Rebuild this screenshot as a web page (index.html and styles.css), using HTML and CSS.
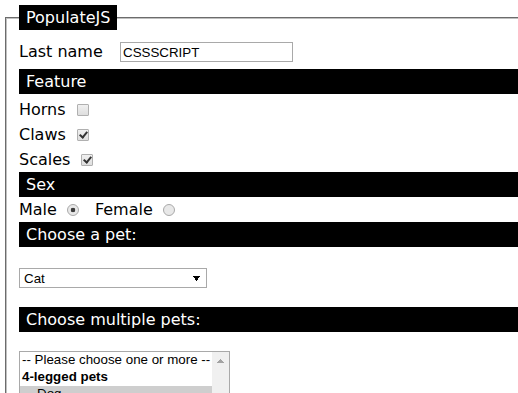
FILE: index.html
```html
<!DOCTYPE html>
<html lang="en">
<head>
<meta charset="utf-8">
<title>PopulateJS</title>
<link rel="stylesheet" href="styles.css">
</head>
<body>
<form class="form">
  <fieldset class="panel">
    <legend class="panel-title">PopulateJS</legend>
    <div class="name-row">
      <label for="lastname" class="name-label">Last name</label>
      <input id="lastname" class="text-input" type="text" value="CSSSCRIPT">
    </div>
    <h2 class="bar">Feature</h2>
    <div class="checks">
      <label class="check-row">Horns<input type="checkbox" class="check" name="horns"></label>
      <label class="check-row">Claws<input type="checkbox" class="check" name="claws" checked></label>
      <label class="check-row">Scales<input type="checkbox" class="check" name="scales" checked></label>
    </div>
    <h2 class="bar">Sex</h2>
    <div class="radio-row">
      <label class="radio-label">Male<input type="radio" class="radio" name="sex" value="male" checked></label>
      <label class="radio-label">Female<input type="radio" class="radio" name="sex" value="female"></label>
    </div>
    <h2 class="bar">Choose a pet:</h2>
    <select class="single" name="pet">
      <option>Dog</option>
      <option selected>Cat</option>
      <option>Hamster</option>
    </select>
    <h2 class="bar">Choose multiple pets:</h2>
    <div class="listbox">
      <select class="multi" name="pets" multiple size="6">
        <option>-- Please choose one or more --</option>
        <optgroup label="4-legged pets">
          <option selected>Dog</option>
          <option>Cat</option>
          <option>Hamster</option>
        </optgroup>
        <optgroup label="Flying pets">
          <option>Parrot</option>
          <option>Macaw</option>
          <option>Albatross</option>
        </optgroup>
      </select>
      <div class="scrollbar" aria-hidden="true">
        <div class="scroll-up"></div>
      </div>
    </div>
  </fieldset>
</form>
</body>
</html>
```
FILE: styles.css
```css
html {
  overflow: hidden;
}
body {
  margin: 0;
  background: #fff;
  color: #000;
  font-family: "DejaVu Sans", Verdana, sans-serif;
  font-size: 16px;
}
.form {
  margin: 0;
}
.panel {
  box-sizing: border-box;
  width: 640px;
  margin: 5px 0 0 5px;
  padding: 0 12px 20px 12px;
  border: 2px groove #c0c0c0;
  min-width: 0;
}
.panel-title {
  background: #000;
  color: #fff;
  padding: 0 7px;
  line-height: 25px;
  height: 25px;
}
.name-row {
  display: flex;
  align-items: center;
  padding: 12px 0 7px 0;
}
.name-label {
  flex: none;
  width: 101px;
  line-height: 20px;
}
.text-input {
  box-sizing: border-box;
  width: 173px;
  height: 20px;
  margin: 0;
  padding: 0 2px;
  border: 1px solid #a9a9a9;
  font-family: "Liberation Sans", Arial, sans-serif;
  font-size: 13.33px;
  color: #000;
}
.bar {
  margin: 0;
  height: 25px;
  line-height: 25px;
  padding-left: 7px;
  background: #000;
  color: #fff;
  font-size: 16px;
  font-weight: normal;
}
.checks {
  padding-top: 3px;
}
.check-row {
  display: flex;
  align-items: center;
  height: 25px;
}
.check {
  appearance: none;
  -webkit-appearance: none;
  box-sizing: border-box;
  position: relative;
  width: 12px;
  height: 12px;
  margin: 1px 0 0 11px;
  border: 1px solid #b0b0b0;
  border-radius: 1px;
  background: linear-gradient(#f0f0f0, #dedede);
}
.check:checked::after {
  content: "";
  position: absolute;
  left: 3px;
  top: 0;
  width: 3px;
  height: 6px;
  border: solid #333;
  border-width: 0 2px 2px 0;
  transform: rotate(40deg);
}
.radio-row {
  display: flex;
  align-items: center;
  height: 25px;
}
.radio-label {
  display: flex;
  align-items: center;
}
.radio {
  appearance: none;
  -webkit-appearance: none;
  box-sizing: border-box;
  width: 12px;
  height: 12px;
  margin: 1px 16px 0 10px;
  border: 1px solid #a9a9a9;
  border-radius: 50%;
  background: #e8e8e8;
}
.radio:checked {
  background: radial-gradient(circle, #3c3c3c 0 2px, #e8e8e8 2.6px);
}
.single {
  appearance: none;
  -webkit-appearance: none;
  box-sizing: border-box;
  display: block;
  width: 188px;
  height: 20px;
  margin: 21px 0 19px 0;
  padding: 0 0 0 4px;
  border: 1px solid #a9a9a9;
  border-radius: 0;
  background-color: #fff;
  background-image: conic-gradient(from -35deg at 50% 100%, #000 70deg, transparent 0);
  background-size: 7px 5px;
  background-repeat: no-repeat;
  background-position: right 6px center;
  font-family: "Liberation Sans", Arial, sans-serif;
  font-size: 13.33px;
  color: #000;
}
.listbox {
  box-sizing: border-box;
  display: flex;
  width: 211px;
  height: 104px;
  margin-top: 19px;
  border: 1px solid #a9a9a9;
  background: #fff;
}
.multi {
  box-sizing: border-box;
  flex: 1;
  min-width: 0;
  height: 100%;
  overflow: hidden;
  margin: 0;
  padding: 0;
  border: 0;
  outline: none;
  font-family: "Liberation Sans", Arial, sans-serif;
  font-size: 13.33px;
  color: #000;
  background: #fff;
}
.multi option {
  padding: 0 2px 1px;
  line-height: 16px;
  font-weight: normal;
}
.multi optgroup {
  font-weight: bold;
}
.multi optgroup option {
  padding-left: 17px;
}
.multi option:checked {
  background: #cecece linear-gradient(#cecece, #cecece);
  color: #000;
}
.scrollbar {
  flex: none;
  width: 17px;
  display: flex;
  flex-direction: column;
  background: #f0f0f0;
}
.scroll-up {
  height: 17px;
  background-image: conic-gradient(from 135deg at 50% 0, #a3a3a3 90deg, transparent 0);
  background-size: 7px 4px;
  background-repeat: no-repeat;
  background-position: center;
}
```
